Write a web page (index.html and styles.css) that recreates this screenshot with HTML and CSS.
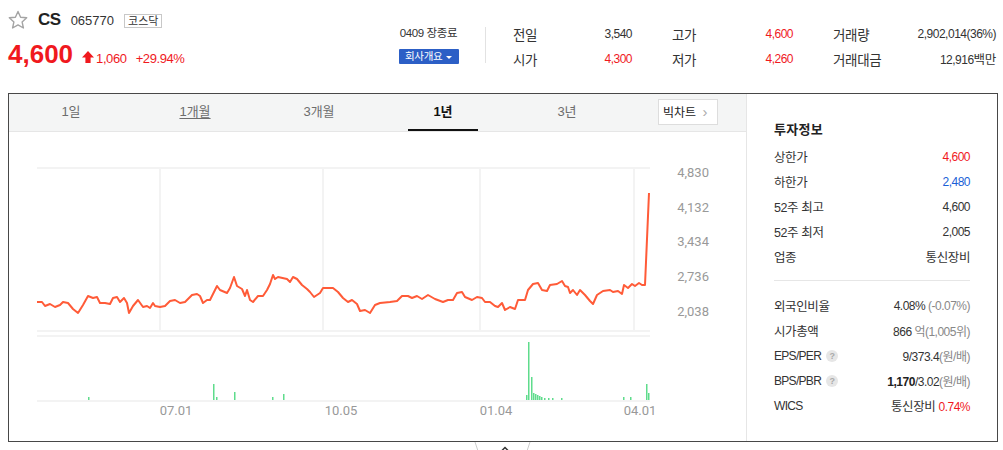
FILE: index.html
```html
<!DOCTYPE html>
<html lang="ko">
<head>
    <meta charset="UTF-8">
    <meta name="viewport" content="width=device-width, initial-scale=1.0">
    <title>CS 065770 - 시세</title>
    <link rel="stylesheet" href="styles.css">
</head>
<body>
    <div class="summary">
        <div class="stock-main">
            <div class="name-row">
                <svg class="star" viewBox="0 0 20 20">
                    <polygon points="10,1.5 12.6,7.2 18.7,7.8 14.1,11.9 15.4,18 10,14.9 4.6,18 5.9,11.9 1.3,7.8 7.4,7.2" fill="none" stroke="#a4a4a4" stroke-width="1.4" stroke-linejoin="round"/>
                </svg>
                <span class="stock-name">CS</span>
                <span class="stock-code">065770</span>
                <span class="market">코스닥</span>
            </div>
            <div class="price-row">
                <span class="price">4,600</span>
                <svg class="up-arrow" viewBox="0 0 12 12">
                    <polygon points="6,0 12,6.5 8.6,6.5 8.6,12 3.4,12 3.4,6.5 0,6.5" fill="#f0191e"/>
                </svg>
                <span class="change">1,060</span>
                <span class="rate">+29.94%</span>
            </div>
        </div>

        <div class="status">
            <span class="status-time">0409 장종료</span>
            <span class="company-btn">회사개요 <i class="caret"></i></span>
        </div>

        <div class="divider"></div>

        <div class="quote-table">
            <div class="quote"><span class="label">전일</span><span class="num">3,540</span></div>
            <div class="quote"><span class="label">고가</span><span class="num up">4,600</span></div>
            <div class="quote"><span class="label">거래량</span><span class="num">2,902,014(36%)</span></div>
            <div class="quote"><span class="label">시가</span><span class="num up">4,300</span></div>
            <div class="quote"><span class="label">저가</span><span class="num up">4,260</span></div>
            <div class="quote"><span class="label">거래대금</span><span class="num">12,916<span class="unit">백만</span></span></div>
        </div>
    </div>

    <div class="chart-box">
        <div class="chart-area">
            <div class="tabs">
                <span class="tab">1일</span>
                <span class="tab"><u>1개월</u></span>
                <span class="tab">3개월</span>
                <span class="tab active"><span class="tab-label">1년</span></span>
                <span class="tab">3년</span>
                <span class="big-chart">빅차트 <i class="chev">&rsaquo;</i></span>
            </div>
            <svg class="chart" width="737" height="309" viewBox="9 132 737 309">
                <g stroke="#f3f3f3" stroke-width="2">
                    <line x1="37" y1="168" x2="650" y2="168"/>
                    <line x1="160" y1="168" x2="160" y2="331"/>
                    <line x1="323" y1="168" x2="323" y2="331"/>
                    <line x1="480" y1="168" x2="480" y2="331"/>
                    <line x1="634" y1="168" x2="634" y2="331"/>
                    <line x1="37" y1="331" x2="650" y2="331"/>
                    <line x1="37" y1="336" x2="650" y2="336"/>
                    <line x1="37" y1="401" x2="650" y2="401"/>
                </g>
                <polyline fill="none" stroke="#ff5b38" stroke-width="2" stroke-linejoin="round"
                    points="37,302 42,302 45,306 50,304 55,307 60,305 63,302 68,303 73,309 78,313 83,305 88,296 93,298 97,297 100,303 105,303 110,304 113,298 117,297 120,302 124,298 127,303 129,313 133,306 138,300 143,307 147,306 150,308 153,303 155,306 160,307 165,306 170,301 175,300 180,303 185,302 192,295 197,294 200,296 203,303 207,300 210,300 217,286 220,290 227,293 230,288 234,277 237,286 242,289 245,296 247,290 250,300 253,302 258,296 263,296 267,290 270,284 273,275 275,279 278,277 287,279 290,282 293,277 297,279 302,285 307,289 310,292 314,297 320,293 323,288 333,288 338,292 343,298 348,302 352,300 357,304 360,311 365,310 370,313 375,305 380,303 390,302 397,301 402,296 408,296 412,298 417,296 422,299 428,295 435,299 443,302 448,300 453,300 457,293 462,292 465,297 472,300 477,297 482,298 485,302 490,302 495,306 498,307 502,303 505,310 510,307 515,309 518,300 525,300 528,290 533,284 538,283 542,290 547,291 550,285 557,284 562,281 565,286 568,287 570,293 573,290 577,295 580,290 585,295 590,301 593,304 597,295 603,291 610,290 613,292 618,291 622,294 624,285 628,288 632,284 635,286 639,283 642,285 645,285 649,193"/>
                <g fill="#5fdc8c">
                    <rect x="88" y="397" width="1.5" height="3"/>
                    <rect x="213" y="384" width="1.5" height="16"/>
                    <rect x="216" y="397" width="1.5" height="3"/>
                    <rect x="234" y="392" width="1.5" height="8"/>
                    <rect x="272" y="397" width="1.5" height="3"/>
                    <rect x="283" y="394" width="1.5" height="6"/>
                    <rect x="526" y="395" width="1.5" height="5"/>
                    <rect x="528" y="342" width="1.5" height="58"/>
                    <rect x="531" y="377" width="1.5" height="23"/>
                    <rect x="533" y="393" width="1.5" height="7"/>
                    <rect x="535" y="394" width="1.5" height="6"/>
                    <rect x="537" y="395" width="1.5" height="5"/>
                    <rect x="539" y="396" width="1.5" height="4"/>
                    <rect x="541" y="397" width="1.5" height="3"/>
                    <rect x="544" y="398" width="1.5" height="2"/>
                    <rect x="548" y="398" width="1.5" height="2"/>
                    <rect x="552" y="398" width="1.5" height="2"/>
                    <rect x="561" y="398" width="1.5" height="2"/>
                    <rect x="623" y="397" width="1.5" height="3"/>
                    <rect x="630" y="397" width="1.5" height="3"/>
                    <rect x="646" y="384" width="1.5" height="16"/>
                    <rect x="648" y="393" width="1.5" height="7"/>
                </g>
                <g class="axis-y" text-anchor="end">
                    <text x="709" y="177">4,830</text>
                    <text x="709" y="212">4,132</text>
                    <text x="709" y="246">3,434</text>
                    <text x="709" y="281">2,736</text>
                    <text x="709" y="316">2,038</text>
                </g>
                <g class="axis-x" text-anchor="middle">
                    <text x="176" y="415">07.01</text>
                    <text x="341" y="415">10.05</text>
                    <text x="496" y="415">01.04</text>
                    <text x="640" y="415">04.01</text>
                </g>
            </svg>
        </div>

        <div class="invest-panel">
            <h3>투자정보</h3>
            <div class="row"><span>상한가</span><span class="num up">4,600</span></div>
            <div class="row"><span>하한가</span><span class="num down">2,480</span></div>
            <div class="row"><span>52주 최고</span><span class="num">4,600</span></div>
            <div class="row"><span>52주 최저</span><span class="num">2,005</span></div>
            <div class="row"><span>업종</span><span>통신장비</span></div>
            <div class="panel-line"></div>
            <div class="row"><span>외국인비율</span><span class="num">4.08% <em>(-0.07%)</em></span></div>
            <div class="row"><span>시가총액</span><span class="num">866 <em>억(1,005위)</em></span></div>
            <div class="row"><span class="en">EPS/PER <i class="help">?</i></span><span class="num">9/373.4<em>(원/배)</em></span></div>
            <div class="row"><span class="en">BPS/PBR <i class="help">?</i></span><span class="num"><b>1,170</b>/3.02<em>(원/배)</em></span></div>
            <div class="row"><span class="en">WICS</span><span>통신장비 <span class="num up">0.74%</span></span></div>
        </div>
    </div>

    <div class="handle">
        <svg width="60" height="9" viewBox="0 0 60 9">
            <line x1="2" y1="0" x2="5" y2="9" stroke="#ccc" stroke-width="1"/>
            <line x1="57" y1="0" x2="54" y2="9" stroke="#ccc" stroke-width="1"/>
            <polyline points="29,8.5 32,5.5 35,8.5" fill="none" stroke="#333" stroke-width="1.5"/>
        </svg>
    </div>
</body>
</html>
```

FILE: styles.css
```css
* {
    box-sizing: border-box;
}

body {
    margin: 0;
    font-family: "Liberation Sans", "Noto Sans CJK KR", sans-serif;
    color: #333;
    background-color: #fff;
    font-size: 12px;
}

.num {
    letter-spacing: -0.5px;
}

.up {
    color: #f0191e;
}

.down {
    color: #1a5fd6;
}

/* top summary */
.summary {
    display: flex;
    height: 93px;
}

.stock-main {
    width: 398px;
    padding: 10px 0 0 8px;
}

.name-row {
    display: flex;
    align-items: center;
    height: 20px;
}

.star {
    width: 20px;
    height: 20px;
    margin-right: 10px;
}

.stock-name {
    font-size: 17px;
    font-weight: bold;
    letter-spacing: -0.5px;
    margin-right: 10px;
    color: #222;
}

.stock-code {
    font-size: 13px;
    margin-right: 10px;
}

.market {
    border: 1px solid #c8c8c8;
    font-size: 11px;
    line-height: 12px;
    padding: 0 3px;
    margin-top: 2px;
}

.price-row {
    display: flex;
    align-items: baseline;
    margin-top: 10px;
    color: #f0191e;
}

.price {
    font-size: 26px;
    font-weight: bold;
    line-height: 28px;
}

.up-arrow {
    width: 12px;
    height: 12px;
    margin-left: 9px;
    margin-right: 2px;
}

.change,
.rate {
    font-size: 13px;
    letter-spacing: -0.4px;
}

.rate {
    margin-left: 9px;
}

.status {
    width: 61px;
    padding-top: 25px;
    display: flex;
    flex-direction: column;
    align-items: center;
}

.status-time {
    font-size: 11.5px;
    line-height: 16px;
    letter-spacing: -0.4px;
}

.company-btn {
    margin-top: 8px;
    width: 60px;
    height: 15px;
    background-color: #2c5fc6;
    color: #fff;
    font-size: 10.5px;
    line-height: 15px;
    text-align: center;
    border-radius: 1px;
    letter-spacing: -0.3px;
}

.caret {
    display: inline-block;
    width: 0;
    height: 0;
    border-left: 3px solid transparent;
    border-right: 3px solid transparent;
    border-top: 3px solid #fff;
    vertical-align: middle;
    margin-left: 1px;
}

.divider {
    width: 1px;
    height: 36px;
    margin: 27px 0 0 26px;
    background-color: #e2e2e2;
}

.quote-table {
    margin: 21px 0 0 27px;
    display: grid;
    grid-template-columns: 119px 121px 163px;
    grid-auto-rows: 25px;
    column-gap: 40px;
}

.quote {
    display: flex;
    justify-content: space-between;
    align-items: center;
}

.quote .label {
    font-size: 13.5px;
    letter-spacing: -0.3px;
}

.quote .num {
    font-size: 12px;
}

.unit {
    font-size: 12.5px;
    letter-spacing: -0.3px;
}

/* chart box */
.chart-box {
    display: flex;
    margin: 0 5px 0 8px;
    height: 349px;
    border: 1px solid #484848;
}

.chart-area {
    width: 737px;
}

.tabs {
    display: flex;
    height: 38px;
    background-color: #f4f5f5;
    border-bottom: 1px solid #e6e6e6;
}

.tab {
    width: 124px;
    text-align: center;
    font-size: 13px;
    line-height: 35px;
    color: #6d6d6d;
}

.tab u {
    text-underline-offset: 2px;
}

.tab.active {
    color: #111;
    font-weight: bold;
}

.tab-label {
    display: inline-block;
    width: 70px;
    height: 37px;
    border-bottom: 2px solid #111;
}

.big-chart {
    margin: 5px 0 0 29px;
    width: 60px;
    height: 26px;
    background-color: #fff;
    border: 1px solid #ddd;
    font-size: 12px;
    line-height: 23px;
    padding-left: 4px;
    color: #222;
}

.chev {
    font-style: normal;
    color: #aaa;
    font-size: 15px;
    margin-left: 3px;
}

.chart {
    display: block;
}

.axis-y text,
.axis-x text {
    font-family: Roboto, "Liberation Sans", sans-serif;
    font-size: 13px;
    fill: #999;
}

/* right panel */
.invest-panel {
    flex: 1;
    border-left: 1px solid #e6e6e6;
    padding: 23px 27px 0 27px;
}

.invest-panel h3 {
    margin: 0 0 2px 0;
    font-size: 13px;
    line-height: 25px;
    letter-spacing: 0.3px;
    color: #222;
}

.row {
    display: flex;
    justify-content: space-between;
    align-items: center;
    height: 25px;
    font-size: 12.5px;
    letter-spacing: -0.4px;
}

.row .num {
    font-size: 12px;
}

.row em {
    font-style: normal;
    color: #888;
}

.row b {
    color: #222;
}

.row .en {
    font-size: 12px;
    letter-spacing: -0.7px;
    display: flex;
    align-items: center;
}

.help {
    display: inline-block;
    width: 12px;
    height: 12px;
    border-radius: 50%;
    background-color: #e6e6e6;
    color: #aaa;
    font-style: normal;
    font-size: 9px;
    line-height: 12px;
    text-align: center;
    margin-left: 5px;
    font-weight: bold;
    letter-spacing: 0;
}

.panel-line {
    height: 1px;
    background-color: #e6e6e6;
    margin: 11px 0 12px 0;
}

.handle {
    margin-left: 473px;
    height: 9px;
}

.handle svg {
    display: block;
}
```
